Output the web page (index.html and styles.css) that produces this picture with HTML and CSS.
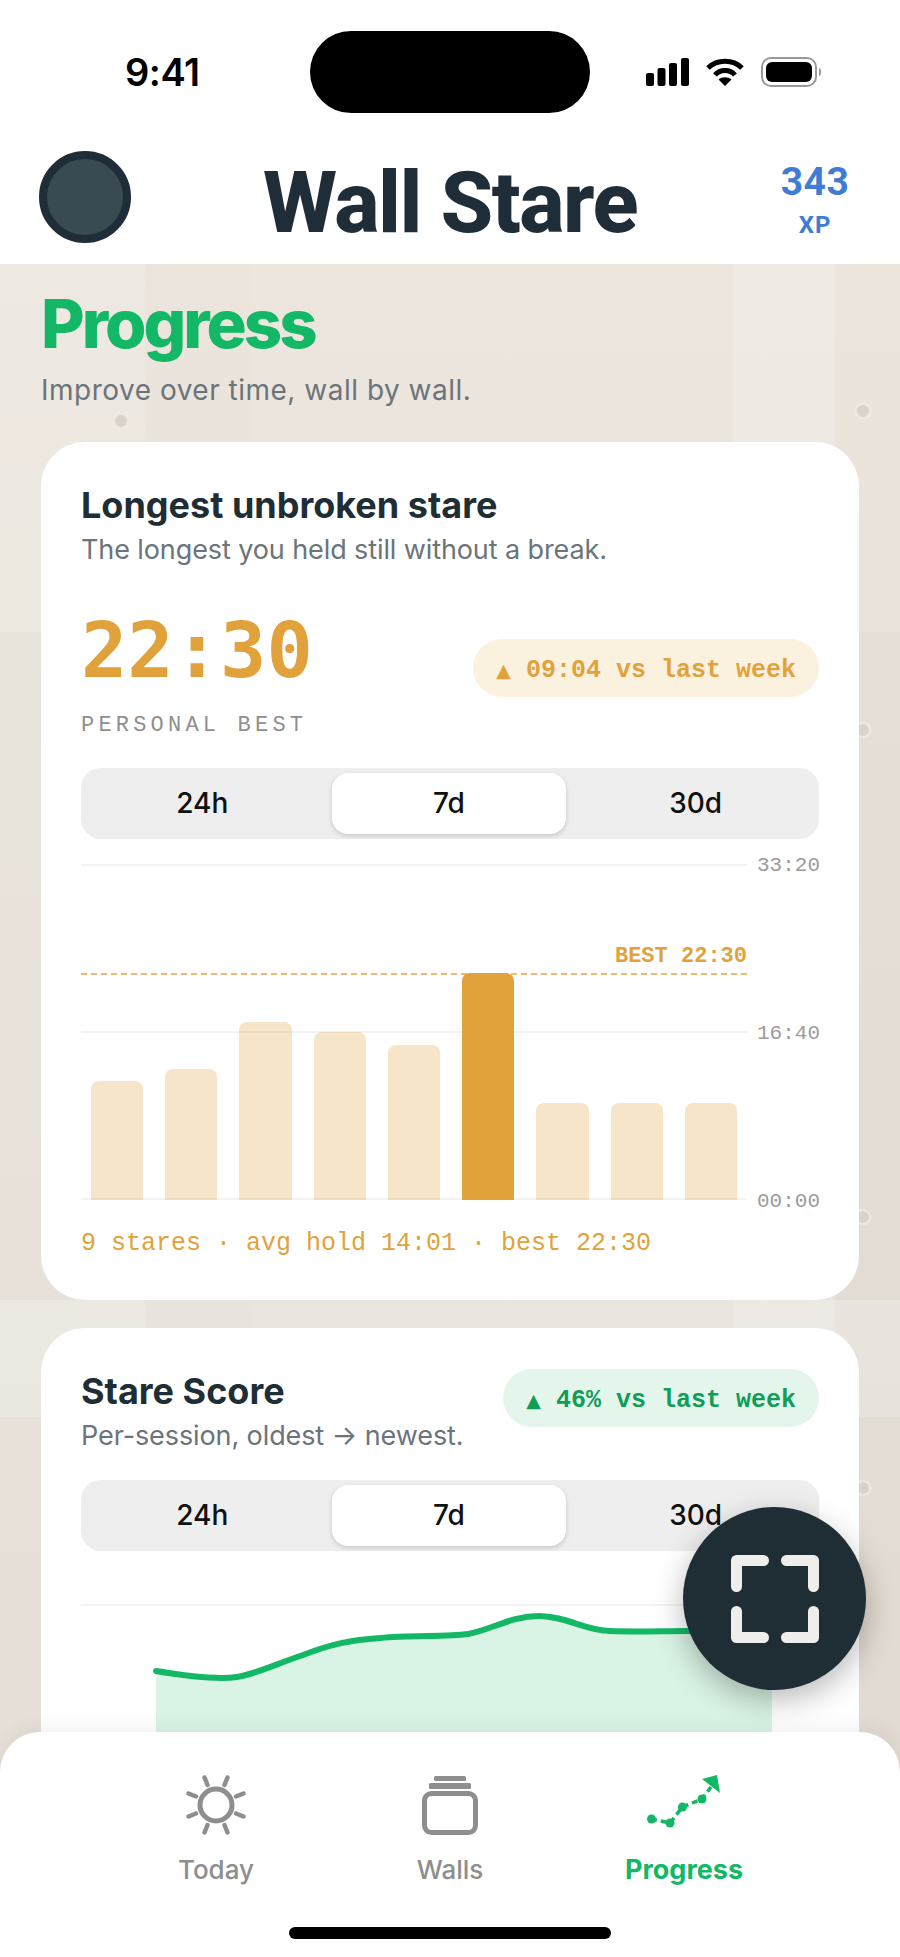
FILE: index.html
```html
<!DOCTYPE html>
<html lang="en">
<head>
  <meta charset="UTF-8">
  <meta name="viewport" content="width=device-width, initial-scale=1.0">
  <title>Wall Stare - Progress</title>
  <link rel="stylesheet" href="styles.css">
</head>
<body>
  <div class="phone">
    <div class="statusbar">
      <div class="time">9:41</div>
      <div class="island"></div>
      <div class="status-icons">
        <svg class="signal" width="43" height="28" viewBox="0 0 43 28" fill="#000">
          <rect x="0" y="15" width="8" height="13" rx="2"/>
          <rect x="11.5" y="10" width="8" height="18" rx="2"/>
          <rect x="23" y="5" width="8" height="23" rx="2"/>
          <rect x="35" y="0" width="8" height="28" rx="2"/>
        </svg>
        <svg class="wifi" width="38" height="28" viewBox="0 0 38 28" fill="none" stroke="#000" stroke-width="5">
          <path d="M2 10 C11 1 27 1 36 10"/>
          <path d="M9 17 C14 11 24 11 29 17"/>
          <path d="M19 28 L12.5 21.5 C16 18.5 22 18.5 25.5 21.5 Z" fill="#000" stroke="none"/>
        </svg>
        <svg class="battery" width="62" height="30" viewBox="0 0 62 30">
          <rect x="1" y="1" width="54" height="28" rx="9" fill="none" stroke="#999" stroke-width="2"/>
          <rect x="5" y="5" width="46" height="20" rx="6" fill="#000"/>
          <path d="M58 11 C61 12 61 18 58 19 Z" fill="#999"/>
        </svg>
      </div>
    </div>

    <header class="topbar">
      <div class="avatar"></div>
      <div class="brand">Wall Stare</div>
      <div class="xp">
        <span class="xp-num">343</span>
        <span class="xp-label">XP</span>
      </div>
    </header>

    <main class="wall">
      <h1 class="page-title">Progress</h1>
      <p class="page-sub">Improve over time, wall by wall.</p>

      <section class="card">
        <h2>Longest unbroken stare</h2>
        <p class="card-sub">The longest you held still without a break.</p>

        <div class="metric-row">
          <div>
            <div class="metric">22:30</div>
            <div class="metric-label">PERSONAL BEST</div>
          </div>
          <div class="pill pill-amber"><span class="tri">▲</span> 09:04 vs last week</div>
        </div>

        <div class="segments">
          <div class="seg">24h</div>
          <div class="seg active">7d</div>
          <div class="seg">30d</div>
        </div>

        <div class="chart">
          <div class="plot">
            <div class="gridlines"><i></i><i></i><i></i></div>
            <div class="best-line"><span>BEST 22:30</span></div>
            <div class="bars">
              <div class="bar" style="height: 119px"></div>
              <div class="bar" style="height: 131px"></div>
              <div class="bar" style="height: 178px"></div>
              <div class="bar" style="height: 168px"></div>
              <div class="bar" style="height: 155px"></div>
              <div class="bar top" style="height: 227px"></div>
              <div class="bar" style="height: 97px"></div>
              <div class="bar" style="height: 97px"></div>
              <div class="bar" style="height: 97px"></div>
            </div>
          </div>
          <div class="axis">
            <span>33:20</span>
            <span>16:40</span>
            <span>00:00</span>
          </div>
        </div>

        <div class="chart-foot">9 stares · avg hold 14:01 · best 22:30</div>
      </section>

      <section class="card">
        <div class="score-head">
          <div>
            <h2>Stare Score</h2>
            <p class="card-sub">Per-session, oldest → newest.</p>
          </div>
          <div class="pill pill-green"><span class="tri">▲</span> 46% vs last week</div>
        </div>

        <div class="segments tight">
          <div class="seg">24h</div>
          <div class="seg active">7d</div>
          <div class="seg">30d</div>
        </div>

        <svg class="score-chart" width="738" height="220" viewBox="0 0 738 220" fill="none">
          <line x1="0" y1="1" x2="666" y2="1" stroke="#f2f2f2" stroke-width="2"/>
          <path d="M75 67 C105 72 135 76 156 73 C175 70 195 60 222 51 C250 40 270 36 299 34 C330 31 365 33 387 30 C410 26 430 12 458 12 C485 12 505 27 529 27 C555 28 580 27 606 27 C640 27 670 27 691 27 L691 220 L75 220 Z" fill="#d9f3e4"/>
          <path d="M75 67 C105 72 135 76 156 73 C175 70 195 60 222 51 C250 40 270 36 299 34 C330 31 365 33 387 30 C410 26 430 12 458 12 C485 12 505 27 529 27 C555 28 580 27 606 27 C640 27 670 27 691 27" stroke="#12b866" stroke-width="6" stroke-linecap="round"/>
        </svg>
      </section>
    </main>

    <button class="fab" aria-label="Start stare">
      <svg width="88" height="88" viewBox="0 0 88 88" fill="none" stroke="#f0eeea" stroke-width="11" stroke-linecap="round" stroke-linejoin="round">
        <path d="M5.5 31.5 V5.5 H32.5"/>
        <path d="M55.5 5.5 H82.5 V31.5"/>
        <path d="M5.5 56.5 V82.5 H32.5"/>
        <path d="M82.5 56.5 V82.5 H55.5"/>
      </svg>
    </button>

    <nav class="tabbar">
      <div class="tabs">
        <div class="tab">
          <svg width="60" height="60" viewBox="0 0 60 60" fill="none" stroke="#8e8e8e">
            <circle cx="30" cy="30" r="16" stroke-width="5"/>
            <g stroke-width="4.5" stroke-linecap="round">
              <path d="M18.5 2.5 L21.5 10"/>
              <path d="M41.5 2.5 L38.5 10"/>
              <path d="M2.5 18.5 L10 21.5"/>
              <path d="M57.5 18.5 L50 21.5"/>
              <path d="M2.5 41.5 L10 38.5"/>
              <path d="M57.5 41.5 L50 38.5"/>
              <path d="M18.5 57.5 L21.5 50"/>
              <path d="M41.5 57.5 L38.5 50"/>
            </g>
          </svg>
          <span>Today</span>
        </div>
        <div class="tab">
          <svg width="56" height="60" viewBox="0 0 56 60" fill="#8e8e8e">
            <rect x="12" y="1" width="32" height="5" rx="1.5"/>
            <rect x="7" y="8" width="42" height="6" rx="1.5"/>
            <rect x="2.5" y="18.5" width="51" height="39" rx="7" fill="none" stroke="#8e8e8e" stroke-width="5"/>
          </svg>
          <span>Walls</span>
        </div>
        <div class="tab current">
          <svg width="74" height="60" viewBox="0 0 74 60" fill="#12b866">
            <path d="M4 44 L23 48 L35.5 32 L55 24 L64 12" fill="none" stroke="#12b866" stroke-width="3.5" stroke-dasharray="6 4"/>
            <circle cx="4.5" cy="44" r="4.5"/>
            <circle cx="23" cy="48" r="4.5"/>
            <circle cx="35.5" cy="32" r="4.5"/>
            <circle cx="55" cy="24" r="4.5"/>
            <path d="M55 4 L70 0 L73 18 Z"/>
          </svg>
          <span>Progress</span>
        </div>
      </div>
      <div class="home-bar"></div>
    </nav>
  </div>
</body>
</html>
```
FILE: styles.css
```css
* {
  box-sizing: border-box;
}

body {
  margin: 0;
  background: #fff;
  font-family: Inter, "Noto Sans", sans-serif;
  color: #1f2d35;
}

.phone {
  position: relative;
  width: 900px;
  height: 1957px;
  overflow: hidden;
  display: flex;
  flex-direction: column;
  background: #fff;
}

/* Status bar */
.statusbar {
  display: grid;
  grid-template-columns: 310px 280px 1fr;
  align-items: center;
  padding-top: 31px;
}

.time {
  padding-left: 125px;
  font-size: 38px;
  font-weight: 600;
  color: #000;
  letter-spacing: -0.5px;
}

.island {
  height: 82px;
  border-radius: 41px;
  background: #000;
}

.status-icons {
  display: flex;
  align-items: center;
  gap: 17px;
  padding-left: 56px;
}

/* Top bar */
.topbar {
  display: grid;
  grid-template-columns: 92px 1fr 92px;
  align-items: start;
  height: 151px;
  padding: 38px 39px 0;
}

.avatar {
  width: 92px;
  height: 92px;
  border-radius: 50%;
  border: 8px solid #1f2d38;
  background: #3a4a52;
}

.brand {
  margin-top: 6px;
  text-align: center;
  font-family: Roboto, sans-serif;
  font-size: 85px;
  font-weight: 800;
  letter-spacing: -1.5px;
  line-height: 92px;
  color: #1f2d38;
}

.xp {
  margin-top: 10px;
  display: flex;
  flex-direction: column;
  align-items: center;
  font-family: Roboto, sans-serif;
  font-weight: 700;
  color: #3f7cd6;
}

.xp-num {
  font-size: 39px;
  line-height: 42px;
  letter-spacing: 0.5px;
}

.xp-label {
  margin-top: 7px;
  font-size: 24px;
  line-height: 30px;
  letter-spacing: 1px;
}

/* Wall */
.wall {
  flex: 1;
  min-height: 0;
  overflow: hidden;
  padding: 20px 41px 0;
  background:
    radial-gradient(circle 9px at 121px 157px, #d9d2c8 0, #d9d2c8 5px, #efebe4 7px, transparent 9px),
    radial-gradient(circle 9px at 863px 147px, #d9d2c8 0, #d9d2c8 5px, #efebe4 7px, transparent 9px),
    radial-gradient(circle 9px at 863px 466px, #d9d2c8 0, #d9d2c8 5px, #efebe4 7px, transparent 9px),
    radial-gradient(circle 9px at 863px 953px, #d9d2c8 0, #d9d2c8 5px, #efebe4 7px, transparent 9px),
    radial-gradient(circle 9px at 863px 1224px, #d9d2c8 0, #d9d2c8 5px, #efebe4 7px, transparent 9px),
    linear-gradient(90deg, rgba(255, 255, 255, 0.14) 0, rgba(255, 255, 255, 0.14) 145px, transparent 145px, transparent 250px, rgba(255, 255, 255, 0.05) 250px, rgba(255, 255, 255, 0.05) 733px, rgba(255, 255, 255, 0.2) 733px, rgba(255, 255, 255, 0.2) 835px, transparent 835px),
    linear-gradient(180deg, #ebe5dd 0, #e9e3da 368px, #e5dfd6 368px, #e3dcd3 1036px, #e9e4dd 1036px, #e7e2db 1153px, #e3dcd3 1153px, #e1dad1 100%);
}

.page-title {
  margin: 0;
  font-size: 67px;
  font-weight: 800;
  line-height: 80px;
  letter-spacing: -3px;
  color: #12b866;
}

.page-sub {
  margin: 8px 0 0;
  font-size: 28px;
  line-height: 36px;
  letter-spacing: 0.5px;
  color: #6b747a;
}

/* Cards */
.card {
  margin-bottom: 28px;
  padding: 40px;
  border-radius: 44px;
  background: #fff;
}

.page-sub + .card {
  margin-top: 34px;
}

h2 {
  margin: 0;
  font-size: 36px;
  font-weight: 700;
  line-height: 46px;
  color: #1f2d35;
}

.card-sub {
  margin: 4px 0 0;
  font-size: 27px;
  line-height: 36px;
  letter-spacing: -0.1px;
  color: #6b747a;
}

.metric-row {
  display: flex;
  justify-content: space-between;
  align-items: flex-start;
  margin-top: 41px;
}

.metric {
  font-family: "DejaVu Sans Mono", monospace;
  font-size: 77px;
  font-weight: 700;
  line-height: 84px;
  color: #e1a23c;
}

.metric-label {
  margin-top: 18px;
  font-family: "Liberation Mono", monospace;
  font-size: 22px;
  line-height: 30px;
  letter-spacing: 4.2px;
  color: #8f8f8f;
}

.pill {
  height: 58px;
  padding: 0 23px;
  border-radius: 29px;
  font-family: "Liberation Mono", monospace;
  font-size: 25px;
  font-weight: 700;
  line-height: 62px;
  white-space: nowrap;
}

.tri {
  font-family: "DejaVu Sans", sans-serif;
  font-size: 19px;
}

.pill-amber {
  margin-top: 30px;
  background: #fbf1df;
  color: #e1a23c;
}

.pill-green {
  margin-top: 1px;
  background: #e4f6ec;
  color: #0f9d58;
}

/* Segmented control */
.segments {
  display: grid;
  grid-template-columns: repeat(3, 1fr);
  gap: 12px;
  height: 71px;
  margin-top: 27px;
  padding: 5px 6px 5px 4px;
  border-radius: 20px;
  background: #eeeeee;
}

.segments.tight {
  margin-top: 26px;
}

.seg {
  font-size: 28px;
  font-weight: 500;
  line-height: 61px;
  text-align: center;
  color: #111;
}

.seg.active {
  border-radius: 16px;
  background: #fff;
  box-shadow: 0 2px 5px rgba(0, 0, 0, 0.16);
}

/* Bar chart */
.chart {
  display: grid;
  grid-template-columns: 666px 1fr;
  column-gap: 10px;
  height: 336px;
  margin-top: 25px;
}

.plot {
  position: relative;
}

.gridlines {
  display: flex;
  flex-direction: column;
  justify-content: space-between;
  height: 100%;
}

.gridlines i {
  display: block;
  height: 2px;
  background: #f2f2f2;
}

.best-line {
  position: absolute;
  left: 0;
  right: 0;
  top: 109px;
  border-top: 2px dashed #e9bb73;
}

.best-line span {
  position: absolute;
  right: 0;
  bottom: 5px;
  font-family: "Liberation Mono", monospace;
  font-size: 22px;
  font-weight: 700;
  line-height: 26px;
  color: #e1a23c;
}

.bars {
  position: absolute;
  left: 0;
  right: 0;
  bottom: 0;
  display: flex;
  align-items: flex-end;
  gap: 22px;
  padding: 0 10px;
}

.bar {
  flex: 1;
  border-radius: 8px 8px 0 0;
  background: rgba(225, 162, 60, 0.28);
}

.bar.top {
  background: #e1a23c;
}

.axis {
  display: flex;
  flex-direction: column;
  justify-content: space-between;
  margin: -11px 0 -15px;
  font-family: "Liberation Mono", monospace;
  font-size: 21px;
  line-height: 26px;
  color: #9b9b9b;
}

.chart-foot {
  margin-top: 28px;
  font-family: "Liberation Mono", monospace;
  font-size: 25px;
  line-height: 32px;
  color: #e1a23c;
}

/* Score card */
.score-head {
  display: flex;
  justify-content: space-between;
  align-items: flex-start;
}

.score-chart {
  display: block;
  margin-top: 53px;
}

/* Start button */
.fab {
  position: absolute;
  left: 683px;
  top: 1507px;
  display: flex;
  justify-content: center;
  align-items: center;
  width: 183px;
  height: 183px;
  padding: 0;
  border: none;
  border-radius: 50%;
  background: #1f2d35;
  box-shadow: 0 10px 30px rgba(0, 0, 0, 0.28);
}

/* Tab bar */
.tabbar {
  position: absolute;
  left: 0;
  right: 0;
  bottom: 0;
  height: 225px;
  padding-top: 43px;
  border-radius: 40px 40px 0 0;
  background: #fff;
  box-shadow: 0 -6px 20px rgba(0, 0, 0, 0.05);
}

.tabs {
  display: grid;
  grid-template-columns: repeat(3, 1fr);
  padding: 0 99px;
}

.tab {
  display: flex;
  flex-direction: column;
  align-items: center;
  gap: 19px;
  font-size: 26px;
  font-weight: 500;
  line-height: 32px;
  color: #8e8e8e;
}

.tab.current {
  font-size: 27px;
  font-weight: 700;
  color: #12b866;
}

.home-bar {
  width: 322px;
  height: 12px;
  margin: 41px auto 0;
  border-radius: 6px;
  background: #000;
}
```
